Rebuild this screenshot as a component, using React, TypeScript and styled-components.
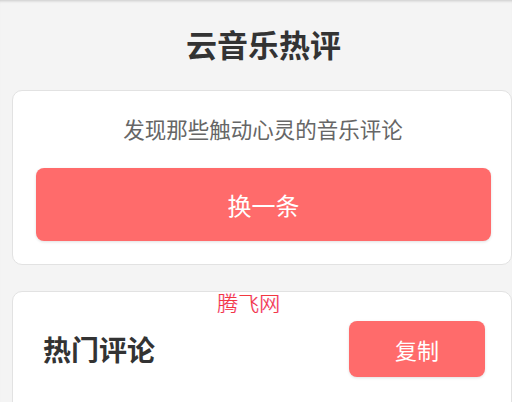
import styled, { createGlobalStyle } from 'styled-components'

const GlobalStyle = createGlobalStyle`
  html, body {
    margin: 0;
    padding: 0;
    background: #f4f4f4;
    font-family: 'Noto Sans CJK SC', 'Noto Sans', sans-serif;
    overflow: hidden;
  }
`

const Page = styled.div`
  position: relative;
  height: 402px;
  overflow: hidden;
  padding: 0 0 0 12px;
  box-shadow: inset 0 3px 3px -2px rgba(0, 0, 0, 0.18);
`

const Heading = styled.h1`
  margin: 0;
  padding: 22px 0 0 3px;
  width: 500px;
  height: 68px;
  box-sizing: border-box;
  text-align: center;
  font-size: 31px;
  line-height: 44px;
  font-weight: 700;
  color: #333;
`

const Card = styled.section`
  position: relative;
  background: #fff;
  border: 1px solid #e2e2e2;
  border-radius: 10px;
  width: 500px;
  box-sizing: border-box;
`

const IntroCard = styled(Card)`
  margin-top: 22px;
  padding: 20px 23px 23px 23px;
  display: flex;
  flex-direction: column;
  gap: 21px;
`

const Subtitle = styled.p`
  margin: 0;
  padding-left: 2px;
  text-align: center;
  font-size: 21.5px;
  line-height: 36px;
  color: #666;
`

const Button = styled.button<{ $big?: boolean }>`
  border: none;
  background: #ff6b6b;
  color: #fff;
  border-radius: 8px;
  font-family: inherit;
  box-shadow: 0 1px 3px rgba(0, 0, 0, 0.12);
  cursor: pointer;
  width: ${(p) => (p.$big ? '455px' : '136px')};
  height: ${(p) => (p.$big ? '73px' : '56px')};
  font-size: ${(p) => (p.$big ? '24px' : '22px')};
  flex-shrink: 0;
`

const CommentCard = styled(Card)`
  margin-top: 26px;
  padding: 29px 26px 30px 30px;
  min-height: 140px;
`

const CardHeader = styled.div`
  display: flex;
  align-items: center;
  justify-content: space-between;
`

const SectionTitle = styled.h2`
  margin: 0;
  font-size: 28px;
  font-weight: 700;
  color: #333;
`

const Watermark = styled.span`
  position: absolute;
  top: -4px;
  left: 204px;
  font-size: 21px;
  line-height: 28px;
  font-family: 'Noto Sans CJK SC', sans-serif;
  font-weight: 300;
  color: #f2383f;
  text-shadow: 0.5px 0 0 rgba(230, 0, 160, 0.5);
`

export default function App() {
  return (
    <>
      <GlobalStyle />
      <Page>
        <Heading>云音乐热评</Heading>
        <IntroCard>
          <Subtitle>发现那些触动心灵的音乐评论</Subtitle>
          <Button $big>换一条</Button>
        </IntroCard>
        <CommentCard>
          <Watermark>腾飞网</Watermark>
          <CardHeader>
            <SectionTitle>热门评论</SectionTitle>
            <Button>复制</Button>
          </CardHeader>
        </CommentCard>
      </Page>
    </>
  )
}
